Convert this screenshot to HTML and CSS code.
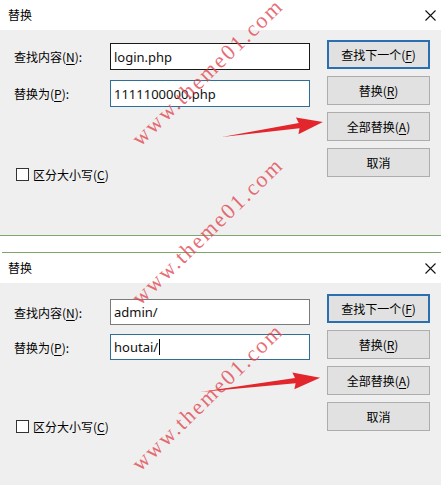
FILE: index.html
```html
<!DOCTYPE html>
<html lang="zh-CN">
<head>
  <meta charset="UTF-8">
  <meta name="viewport" content="width=device-width, initial-scale=1.0">
  <title>替换</title>
  <link rel="stylesheet" href="styles.css">
</head>
<body>
  <div class="screen">
    <section class="dialog dialog-top">
      <header class="titlebar">
        <span class="title">替换</span>
        <svg class="close" width="11" height="11" viewBox="0 0 11 11"><path d="M0.5 0.5 L10.5 10.5 M10.5 0.5 L0.5 10.5" stroke="#111" stroke-width="1.1" fill="none"/></svg>
      </header>
      <div class="panel">
        <div class="form">
          <div class="field">
            <span class="label">查找内容(<u>N</u>):</span>
            <div class="input input-hover">login.php</div>
          </div>
          <div class="field">
            <span class="label">替换为(<u>P</u>):</span>
            <div class="input input-focus">1111100000.php</div>
          </div>
          <div class="check"><span class="box"></span><span>区分大小写(<u>C</u>)</span></div>
        </div>
        <div class="buttons">
          <button class="btn btn-default">查找下一个(<u>F</u>)</button>
          <button class="btn">替换(<u>R</u>)</button>
          <button class="btn">全部替换(<u>A</u>)</button>
          <button class="btn">取消</button>
        </div>
      </div>
    </section>

    <section class="dialog dialog-bottom">
      <header class="titlebar">
        <span class="title">替换</span>
        <svg class="close" width="11" height="11" viewBox="0 0 11 11"><path d="M0.5 0.5 L10.5 10.5 M10.5 0.5 L0.5 10.5" stroke="#111" stroke-width="1.1" fill="none"/></svg>
      </header>
      <div class="panel">
        <div class="form">
          <div class="field">
            <span class="label">查找内容(<u>N</u>):</span>
            <div class="input">admin/</div>
          </div>
          <div class="field">
            <span class="label">替换为(<u>P</u>):</span>
            <div class="input input-focus">houtai/<span class="caret"></span></div>
          </div>
          <div class="check"><span class="box"></span><span>区分大小写(<u>C</u>)</span></div>
        </div>
        <div class="buttons">
          <button class="btn btn-default">查找下一个(<u>F</u>)</button>
          <button class="btn">替换(<u>R</u>)</button>
          <button class="btn">全部替换(<u>A</u>)</button>
          <button class="btn">取消</button>
        </div>
      </div>
    </section>

    <!-- watermark + arrows pasted over the screenshot -->
    <div class="mark mark-1">www.theme01.com</div>
    <div class="mark mark-2">www.theme01.com</div>
    <div class="mark mark-3">www.theme01.com</div>
    <svg class="arrows" width="441" height="485" viewBox="0 0 441 485">
      <g transform="translate(222 137) rotate(-8.4)">
        <polygon points="0,0 78,-2.6 76,-8.5 102,0 76,8.5 78,2.6" fill="#e3262c"/>
      </g>
      <g transform="translate(200 392) rotate(-6.8)">
        <polygon points="0,0 96,-2.6 94,-8.5 121,0 94,8.5 96,2.6" fill="#e3262c"/>
      </g>
    </svg>
  </div>
</body>
</html>
```

FILE: styles.css
```css
body {
  margin: 0;
  background: #fff;
  font-family: "Noto Sans CJK SC", "Noto Sans", sans-serif;
  font-size: 12px;
  color: #000;
  overflow: hidden;
}
.screen {
  position: relative;
  width: 441px;
  height: 485px;
  overflow: hidden;
}
.dialog-top {
  border-bottom: 1px solid #7ea870;
  margin-bottom: 16px;
}
.dialog-bottom {
  border-top: 1px solid #7ea870;
  margin-left: 2px;
}
.dialog-bottom .titlebar {
  margin-left: -2px;
}
.titlebar {
  height: 30px;
  display: flex;
  align-items: center;
  justify-content: space-between;
  padding: 0 5px 0 8px;
  background: #fff;
}
.title {
  line-height: 1;
}
.panel {
  height: 205px;
  display: grid;
  grid-template-columns: 1fr 103px;
  padding: 10px 11px 0 14px;
  box-sizing: border-box;
  background: #efefef;
}
.dialog-bottom .panel {
  margin-left: -2px;
  height: 210px;
  padding-top: 11px;
}
.form {
  padding-top: 3px;
  display: flex;
  flex-direction: column;
  gap: 10px;
}
.dialog-bottom .form {
  padding-top: 5px;
  gap: 9px;
}
.field {
  display: flex;
  align-items: center;
  height: 27px;
}
.dialog-bottom .field {
  height: 26px;
}
.label {
  width: 96px;
}
u {
  text-decoration-thickness: 1px;
  text-underline-offset: 2px;
}
.input {
  width: 200px;
  height: 100%;
  box-sizing: border-box;
  border: 1px solid #7a7a7a;
  background: #fff;
  padding: 0 0 0 3px;
  display: flex;
  align-items: center;
  font-family: "Noto Sans", sans-serif;
  font-size: 13px;
  color: #111;
}
.input-hover {
  border-color: #1a1a1a;
}
.input-focus {
  border-color: #2d6f98;
}
.caret {
  width: 1px;
  height: 16px;
  margin-left: 1px;
  background: #000;
}
.check {
  margin-top: 49px;
  margin-left: 2px;
  display: flex;
  align-items: center;
  gap: 4px;
}
.box {
  width: 13px;
  height: 13px;
  box-sizing: border-box;
  border: 1px solid #333;
  background: #fff;
}
.buttons {
  display: flex;
  flex-direction: column;
  gap: 7px;
}
.btn {
  height: 29px;
  margin: 0;
  padding: 0;
  border: 1px solid #adadad;
  background: #e1e1e1;
  font-family: inherit;
  font-size: 12px;
  color: #000;
}
.btn-default {
  border: 2px solid #2a6fb0;
}
.mark {
  position: absolute;
  font-family: "Liberation Serif", serif;
  font-size: 22px;
  line-height: 22px;
  letter-spacing: 2px;
  color: rgba(226, 70, 80, 0.8);
  white-space: nowrap;
  transform-origin: 0 100%;
  transform: rotate(-44deg);
}
.mark-1 {
  left: 143px;
  top: 128px;
}
.mark-2 {
  left: 143px;
  top: 287px;
}
.mark-3 {
  left: 143px;
  top: 453px;
}
.arrows {
  position: absolute;
  left: 0;
  top: 0;
  pointer-events: none;
}
```
